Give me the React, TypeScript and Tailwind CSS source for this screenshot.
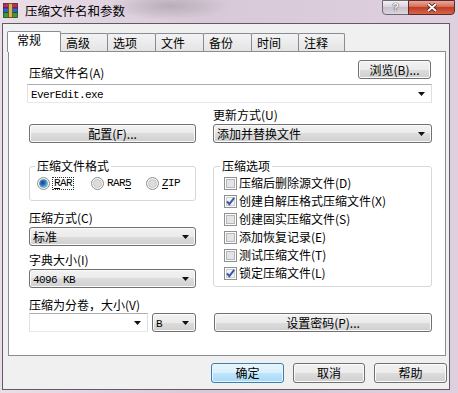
import type { ReactNode } from 'react';

const mono = "font-['Liberation_Mono',monospace] text-[11px] tracking-[-0.6px]";
const grad =
  'border border-[#707070] bg-[linear-gradient(to_bottom,#f2f2f2_0%,#ebebeb_50%,#dddddd_50%,#cfcfcf_100%)] shadow-[inset_0_0_0_1px_#fbfbfb]';

function Arrow() {
  return (
    <svg width="7" height="4" viewBox="0 0 7 4">
      <path d="M0 0H7L3.5 4Z" fill="#111" />
    </svg>
  );
}

function Btn({ children, className = 'h-[19px]' }: { children: ReactNode; className?: string }) {
  return <div className={`flex items-center justify-center rounded-[3px] ${grad} ${className}`}>{children}</div>;
}

function Drop({ children, className = '' }: { children: ReactNode; className?: string }) {
  return (
    <div className={`h-[19px] flex items-center justify-between pl-[3px] pr-[6px] rounded-[3px] ${grad} ${className}`}>
      <span>{children}</span>
      <Arrow />
    </div>
  );
}

function Combo({ children, className = '' }: { children?: ReactNode; className?: string }) {
  return (
    <div className={`h-[19px] flex items-center justify-between pl-[3px] pr-[6px] border border-[#abadb3] border-l-[#e2e3ea] border-b-[#e3e9ef] border-r-[#dbdfe6] bg-white ${className}`}>
      <span>{children}</span>
      <Arrow />
    </div>
  );
}

function Check({ on = false, children }: { on?: boolean; children: ReactNode }) {
  return (
    <div className="h-[18px] flex items-center gap-[2px] ml-[4px]">
      <svg width="13" height="13" viewBox="0 0 13 13">
        <rect x="0.5" y="0.5" width="12" height="12" fill="#fdfdfd" stroke="#8e8f8f" />
        <rect x="2.5" y="2.5" width="8" height="8" fill={on ? '#f2f4f6' : '#e2e4e6'} stroke={on ? '#c9ccd2' : '#b4b8bd'} />
        {on && <path d="M3 6.4L5.3 9.2L10.2 2.8" fill="none" stroke="#3d56a6" strokeWidth="2" />}
      </svg>
      <span>{children}</span>
    </div>
  );
}

function Radio({ on = false }: { on?: boolean }) {
  return (
    <svg width="13" height="13" viewBox="0 0 13 13">
      <defs>
        <radialGradient id="rsel" cx="0.4" cy="0.4" r="0.6">
          <stop offset="0" stopColor="#1b3f74" />
          <stop offset="0.6" stopColor="#2d7fc0" />
          <stop offset="1" stopColor="#8fd0f4" />
        </radialGradient>
      </defs>
      <circle cx="6.5" cy="6.5" r="6" fill="#f4f4f4" stroke="#8e8f8f" />
      <circle cx="6.5" cy="6.5" r="4" fill={on ? 'url(#rsel)' : '#dcdcdc'} stroke={on ? '#4a8ec6' : '#c4c4c4'} strokeWidth="0.8" />
    </svg>
  );
}

function Tab({ label, w, sel = false }: { label: string; w: string; sel?: boolean }) {
  if (sel) {
    return (
      <div className={`relative z-10 h-[21px] -mb-px ${w} pl-[9px] pt-[1px] bg-white border border-b-0 border-[#898c95] rounded-t-[2px]`}>
        {label}
      </div>
    );
  }
  return (
    <div className={`h-[18px] -ml-px ${w} pl-[5px] pt-[2px] border border-b-0 border-[#898c95] rounded-t-[2px] bg-[linear-gradient(to_bottom,#f3f3f3,#e4e4e4)]`}>
      {label}
    </div>
  );
}

function RarIcon() {
  return (
    <svg width="15" height="15" viewBox="0 0 15 15">
      <rect x="0.5" y="0.5" width="14" height="4.5" fill="#c2285a" stroke="#5a1a30" strokeWidth="0.8" />
      <rect x="0.5" y="5" width="14" height="4.5" fill="#2f66c8" stroke="#1a2f60" strokeWidth="0.8" />
      <rect x="0.5" y="9.5" width="14" height="5" fill="#3d9a3a" stroke="#1d4a1a" strokeWidth="0.8" />
      <rect x="5.5" y="0.5" width="4" height="14" fill="#d9b25a" stroke="#6a4a1a" strokeWidth="0.8" />
    </svg>
  );
}

export default function App() {
  return (
    <div className="w-[458px] h-[393px] overflow-hidden flex flex-col text-black text-[12px] leading-[14px] font-['Noto_Sans_CJK_SC','Liberation_Sans',sans-serif] bg-[linear-gradient(to_right,#eadfe9,#d8c9d8_45%,#dfd0df_100%)]">
      {/* title bar */}
      <div className="h-[23px] flex items-start bg-[radial-gradient(ellipse_60px_14px_at_170px_6px,#b8adb8,transparent)]">
        <div className="flex items-center gap-[7px] pl-[3px] pt-[3px]">
          <RarIcon />
          <span className="text-[12.5px] leading-[15px]">压缩文件名和参数</span>
        </div>
        <div className="ml-auto mr-[3px] flex h-[15px]">
          <div className="w-[27px] flex items-center justify-center rounded-bl-[4px] border border-[#6c6874] bg-[linear-gradient(to_bottom,#f4f0f4,#d8d0da_50%,#c8c0cc_50%,#dcd6e0)]">
            <span className="font-['Liberation_Sans',sans-serif] font-bold text-[11px] leading-[11px] text-white [text-shadow:0_0_1px_#333,0_0_1px_#333]">?</span>
          </div>
          <div className="w-[47px] -ml-px flex items-center justify-center rounded-br-[4px] border border-[#5a2a2a] bg-[linear-gradient(to_bottom,#e9a89b,#d4654f_50%,#c23c25_50%,#d5654a)]">
            <svg width="12" height="9" viewBox="0 0 12 9">
              <path d="M2 1L10 8M10 1L2 8" stroke="#4a1a1a" strokeWidth="3.4" />
              <path d="M2 1L10 8M10 1L2 8" stroke="#fff" strokeWidth="1.8" />
            </svg>
          </div>
        </div>
      </div>

      {/* client */}
      <div className="ml-[2px] w-[448px] h-[367px] border border-[#5e5a66] bg-[#f0f0f0] flex flex-col">
        <div className="flex items-end ml-[4px] mt-[7px]">
          <Tab label="常规" w="w-[54px]" sel />
          <Tab label="高级" w="w-[48px]" />
          <Tab label="选项" w="w-[49px]" />
          <Tab label="文件" w="w-[49px]" />
          <Tab label="备份" w="w-[49px]" />
          <Tab label="时间" w="w-[48px]" />
          <Tab label="注释" w="w-[47px]" />
        </div>

        <div className="ml-[5px] w-[438px] h-[305px] border border-[#898c95] bg-white pl-[20px] pr-[13px] pt-[8px] flex flex-col">
          <div className="flex items-start justify-between h-[20px]">
            <span className="mt-[6px]">压缩文件名(A)</span>
            <Btn className="h-[19px] w-[73px] mr-px">浏览(B)...</Btn>
          </div>
          <Combo className="mt-[4px] -ml-[2px] w-[405px]">
            <span className={mono}>EverEdit.exe</span>
          </Combo>

          <div className="flex gap-[17px] mt-[5px]">
            <div className="w-[167px] flex flex-col justify-end">
              <Btn>配置(F)...</Btn>
            </div>
            <div className="flex-1 flex flex-col">
              <span>更新方式(U)</span>
              <Drop className="mt-[2px]">添加并替换文件</Drop>
            </div>
          </div>

          <div className="flex gap-[17px] mt-[16px]">
            <div className="w-[167px] flex flex-col">
              <fieldset className="border border-[#d5d9dc] rounded-[3px] pl-[5px] pb-[10px]">
                <legend className="px-[2px]">压缩文件格式</legend>
                <div className="flex items-center h-[14px] mt-[3px] ml-[2px]">
                  <div className="w-[54px] flex items-center gap-[2px]">
                    <Radio on />
                    <span className={`${mono} h-[13px] flex items-center px-[1px] border border-dotted border-[#333]`}>
                      <u className="underline-offset-2">R</u>AR
                    </span>
                  </div>
                  <div className="w-[55px] flex items-center gap-[3px]">
                    <Radio />
                    <span className={mono}>
                      RAR<u className="underline-offset-2">5</u>
                    </span>
                  </div>
                  <div className="flex items-center gap-[3px]">
                    <Radio />
                    <span className={mono}>
                      <u className="underline-offset-2">Z</u>IP
                    </span>
                  </div>
                </div>
              </fieldset>
              <span className="mt-[10px]">压缩方式(C)</span>
              <Drop className="mt-[2px]">标准</Drop>
              <span className="mt-[7px]">字典大小(I)</span>
              <Drop className="mt-[2px]">
                <span className={mono}>4096 KB</span>
              </Drop>
              <span className="mt-[10px]">压缩为分卷，大小(V)</span>
              <div className="flex gap-[4px] mt-[1px]">
                <Combo className="w-[119px]" />
                <Drop className="w-[44px]">
                  <span className={mono}>B</span>
                </Drop>
              </div>
            </div>

            <div className="flex-1 flex flex-col">
              <fieldset className="border border-[#d5d9dc] rounded-[3px] pl-[6px] pb-[4px]">
                <legend className="px-[2px]">压缩选项</legend>
                <div className="mt-px">
                  <Check>压缩后删除源文件(D)</Check>
                  <Check on>创建自解压格式压缩文件(X)</Check>
                  <Check>创建固实压缩文件(S)</Check>
                  <Check>添加恢复记录(E)</Check>
                  <Check>测试压缩文件(T)</Check>
                  <Check on>锁定压缩文件(L)</Check>
                </div>
              </fieldset>
              <Btn className="h-[19px] mt-auto ml-px">设置密码(P)...</Btn>
            </div>
          </div>
        </div>

        <div className="flex justify-end gap-[9px] pr-[2px] mt-[7px]">
          <div className="w-[73px] h-[20px] flex items-center justify-center rounded-[3px] border border-[#3c7fb1] bg-[linear-gradient(to_bottom,#eaf6fd_0%,#d9f0fc_50%,#bee6fd_50%,#a7d9f5_100%)] shadow-[inset_0_0_0_1px_#e6f4fb]">
            确定
          </div>
          <Btn className="w-[72px] h-[20px]">取消</Btn>
          <Btn className="w-[73px] h-[20px]">帮助</Btn>
        </div>
      </div>
    </div>
  );
}
